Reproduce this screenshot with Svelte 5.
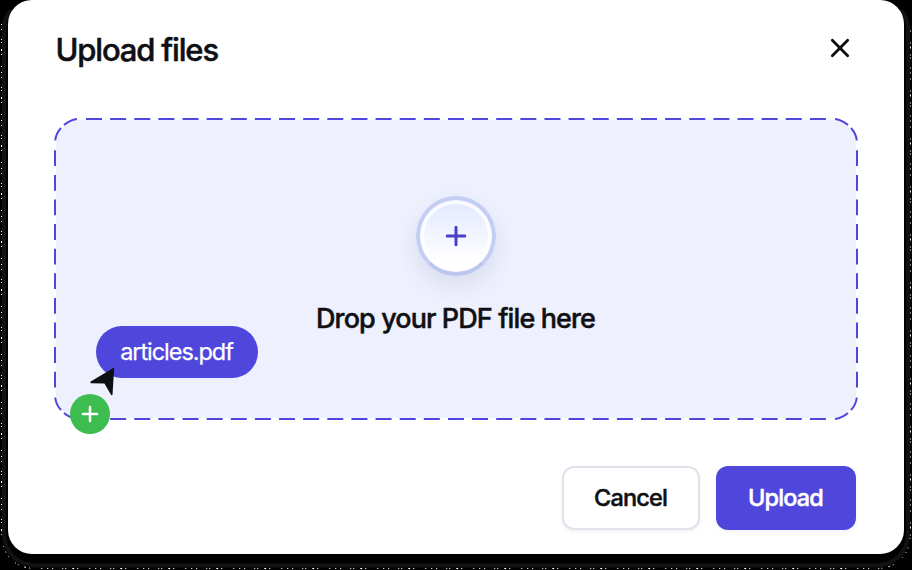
<script>
  const topDashes = Array.from({ length: 31 }, (_, i) => 86 + i * 24.13);
  const sideDashes = Array.from({ length: 10 }, (_, i) => 150.3 + i * 24.6);
</script>

<div class="stage">
  <svg class="fringe" width="912" height="570" viewBox="0 0 912 570" aria-hidden="true">
    <path class="halo" d="M4 26Q5 17 11 10M901 10Q907 17 908 26M4 26V536Q7 562 34 565.5H878Q905 562 908 536V26" />
    <path class="specks" d="M1.5 24V534Q3 565 32 568.5H880Q909 565 910.5 534V28" />
  </svg>
  <section class="dialog">
    <header>
      <h1>Upload files</h1>
      <button class="close" aria-label="Close">
        <svg width="24" height="24" viewBox="0 0 24 24"><path d="M4.3 4.3 19.7 19.7M19.7 4.3 4.3 19.7" /></svg>
      </button>
    </header>
    <div class="drop">
      <svg class="outline" width="804" height="302" viewBox="54 118 804 302" aria-hidden="true">
        {#each topDashes as x}
          <path d="M{x} 119h16M{x} 419h16" />
        {/each}
        {#each sideDashes as y}
          <path d="M55 {y}v15.8M857 {y}v15.8" />
        {/each}
        <g>
          <path d="M77 119.1Q69.5 120.2 64 125.1M61 128Q56 133.2 55.2 140.5" />
          <path d="M77 418.9Q69.5 417.8 64 412.9M61 410Q56 404.8 55.2 397.5" />
        </g>
        <g transform="translate(912 0) scale(-1 1)">
          <path d="M77 119.1Q69.5 120.2 64 125.1M61 128Q56 133.2 55.2 140.5" />
          <path d="M77 418.9Q69.5 417.8 64 412.9M61 410Q56 404.8 55.2 397.5" />
        </g>
      </svg>
      <div class="add">
        <svg width="24" height="24" viewBox="0 0 24 24"><path d="M12 3.2V20.8M3.2 12H20.8" /></svg>
      </div>
      <p>Drop your PDF file here</p>
      <div class="file">articles.pdf</div>
      <svg class="cursor" width="28" height="30" viewBox="0 0 28 30"><path d="M24.2 1.6 0.3 15.8 0.7 17.2 14.4 17.5 21.3 29.2 22.5 29Z" /></svg>
      <div class="badge">
        <svg width="20" height="20" viewBox="0 0 20 20"><path d="M10 2.9V17.1M2.9 10H17.1" /></svg>
      </div>
    </div>
    <footer>
      <button class="btn cancel">Cancel</button>
      <button class="btn primary">Upload</button>
    </footer>
  </section>
</div>

<style>
  :global(body) { margin: 0; background: #000; }
  * { box-sizing: border-box; }
  .stage { width: 912px; height: 570px; position: relative; overflow: hidden; background: #000; padding: 0 8px 16px; font-family: Inter, sans-serif; color: #0f1014; }
  .fringe { position: absolute; left: 0; top: 0; }
  .fringe path { fill: none; }
  .halo { stroke: #121212; stroke-width: 4; }
  .specks { stroke: #fff; stroke-width: 1; stroke-dasharray: 1 4 1 9 1 2 1 6 2 3 1 11 1 5; }
  .dialog { position: relative; height: 554px; background: #fff; border-radius: 24px; padding: 0 48px 24px; display: flex; flex-direction: column; }
  header { height: 118px; flex: none; display: flex; justify-content: space-between; align-items: flex-start; padding-top: 28px; }
  h1 { margin: 0 0 0 -.5px; font-size: 31px; line-height: 43px; font-weight: 500; letter-spacing: -1.16px; -webkit-text-stroke: .5px currentColor; }
  button { font-family: inherit; padding: 0; }
  .close { border: 0; background: none; width: 24px; height: 24px; margin: 8px 4px 0 0; }
  .close svg { display: block; }
  .close path { fill: none; stroke: #0f1014; stroke-width: 2.8; stroke-linecap: round; }
  .drop { position: relative; flex: none; height: 302px; margin: 0 -2px; padding-top: 76px; display: flex; flex-direction: column; align-items: center; border: 2px solid transparent; border-radius: 26px; background: #eef0fe padding-box; }
  .outline { position: absolute; left: -2px; top: -2px; }
  .outline path { fill: none; stroke: #4f46dc; stroke-width: 2; }
  .add { position: relative; width: 80px; height: 80px; border-radius: 50%; border: 4px solid #c4cef5; border-bottom-color: #bbc6ee; background: linear-gradient(#e5eaff 8%, #fff 85%); box-shadow: inset 0 0 0 4px rgba(255,255,255,.8), 0 10px 22px rgba(65,75,105,.11); display: grid; place-items: center; }
  .add path { fill: none; stroke: #4b40c8; stroke-width: 3; stroke-linecap: round; }
  p { margin: 23px 0 0; font-size: 27px; line-height: 40px; font-weight: 500; letter-spacing: -.9px; text-indent: -1px; white-space: nowrap; -webkit-text-stroke: .45px currentColor; }
  .file { position: absolute; left: 40px; top: 206px; width: 162px; height: 52px; border-radius: 26px; background: #4f46dc; color: #fff; font-size: 23.5px; line-height: 52px; text-align: center; letter-spacing: -1.05px; text-indent: -1px; -webkit-text-stroke: .25px currentColor; }
  .cursor { position: absolute; left: 34px; top: 246px; }
  .cursor path { fill: #0f1014; }
  .badge { position: absolute; left: 14px; top: 274px; width: 40px; height: 40px; border-radius: 50%; background: #3dbc50; display: grid; place-items: center; }
  .badge path { fill: none; stroke: #fff; stroke-width: 2.5; stroke-linecap: round; }
  footer { display: flex; justify-content: flex-end; gap: 16px; margin-top: 46px; }
  .btn { height: 64px; border-radius: 12px; font-size: 23.5px; line-height: 30px; font-weight: 500; letter-spacing: -.85px; padding: 0 1px 1px 0; -webkit-text-stroke: .45px currentColor; }
  .cancel { width: 138px; border: 2px solid #dfe2eb; background: #fff; color: #0f1014; box-shadow: 0 2px 4px rgba(20,25,60,.05); }
  .primary { width: 140px; border: 0; background: #4f46dc; color: #fff; box-shadow: 0 2px 4px rgba(20,25,60,.05); }
</style>
